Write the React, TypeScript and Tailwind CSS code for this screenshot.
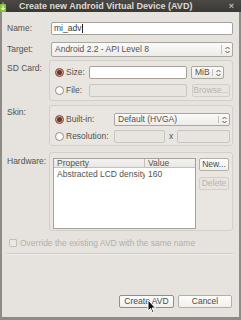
function Radio({ on }: { on?: boolean }) {
  return on ? (
    <span className="w-[9px] h-[9px] shrink-0 rounded-full border border-[#7d4a3b] bg-[#c9a79b] flex items-center justify-center">
      <span className="w-[5px] h-[5px] rounded-full bg-[#6e3526]" />
    </span>
  ) : (
    <span className="w-[9px] h-[9px] shrink-0 rounded-full border border-[#8f8b85] bg-white" />
  );
}

function Spin() {
  return (
    <svg width="5" height="8" viewBox="0 0 5 8" className="shrink-0">
      <path d="M0.5 3 L2.5 1 L4.5 3 M0.5 5 L2.5 7 L4.5 5" fill="none" stroke="#5a5852" strokeWidth="1" />
    </svg>
  );
}

function Combo({ text, className }: { text: string; className: string }) {
  return (
    <div className={`flex items-center rounded-[2px] border border-[#a9a59f] bg-gradient-to-b from-[#fbfaf9] to-[#eeece9] pl-[3px] ${className}`}>
      <span className="flex-1 overflow-hidden whitespace-nowrap">{text}</span>
      <span className="h-[70%] w-px bg-[#c4c0ba]" />
      <span className="w-[10px] flex justify-center">
        <Spin />
      </span>
    </div>
  );
}

function Field({ className, off }: { className: string; off?: boolean }) {
  return (
    <div
      className={`rounded-[2px] border ${off ? "border-[#c9c5bf] bg-[#e8e5e0]" : "border-[#a5a19b] bg-white"} ${className}`}
    />
  );
}

function Btn({ label, className, off, focus }: { label: string; className: string; off?: boolean; focus?: boolean }) {
  return (
    <div
      className={`flex items-center justify-center rounded-[2px] border ${
        focus ? "border-[#9c8a80]" : off ? "border-[#d2cec8]" : "border-[#b3afa9]"
      } ${off ? "bg-[#e8e5e0] text-[#b8b4ad]" : "bg-gradient-to-b from-[#fdfdfc] to-[#f1efec] text-[#4a4944]"} ${className}`}
    >
      {label}
    </div>
  );
}

function Group({ className, children }: { className: string; children: React.ReactNode }) {
  return <div className={`rounded-[3px] border border-[#d3cfc9] bg-[#e9e6e1] ${className}`}>{children}</div>;
}

export default function App() {
  return (
    <div className="relative w-[241px] h-[320px] overflow-hidden flex flex-col bg-[#e6e3de] font-['Liberation_Sans',sans-serif] text-[8.5px] leading-none text-[#53524d]">
      {/* title bar */}
      <div className="h-[12px] shrink-0 flex items-center bg-gradient-to-b from-[#4a4945] to-[#3a3935] text-[#dfdbd2]">
        <svg width="7" height="10" viewBox="0 0 7 10" className="ml-0 mt-px">
          <rect x="0" y="2" width="6" height="8" rx="1" fill="#8ec23f" />
          <path d="M3 0 L3 2" stroke="#8ec23f" />
          <path d="M3 3.5 L3 7.5 M1.3 6 L3 7.8 L4.7 6" stroke="#ffffff" strokeWidth="1" fill="none" />
        </svg>
        <span className="ml-[12px] font-bold text-[9px]">Create new Android Virtual Device (AVD)</span>
        <span className="ml-auto mr-[7px] text-[9px] font-bold text-[#bdbab3]">×</span>
      </div>

      {/* body */}
      <div className="flex-1 flex flex-col border-x-2 border-b-[3px] border-[#8e8b86] pl-[5px] pr-[6px]">
        {/* Name */}
        <div className="mt-[10px] flex items-center h-[13px]">
          <span className="w-[43px]">Name:</span>
          <div className="ml-[1px] w-[182px] h-[13px] bg-white border border-[#a5a19b] rounded-[2px] flex items-center pl-[2px] text-[#3c3b37]">
            mi_adv<span className="ml-px w-px h-[9px] bg-[#222]" />
          </div>
        </div>

        {/* Target */}
        <div className="mt-[7px] flex items-center h-[15px]">
          <span className="w-[43px]">Target:</span>
          <Combo text="Android 2.2 - API Level 8" className="ml-[1px] w-[182px] h-[15px]" />
        </div>

        {/* SD Card */}
        <div className="mt-[3px] flex items-start">
          <span className="w-[42px] mt-[4px]">SD Card:</span>
          <Group className="w-[184px] h-[41px] pt-[5px] pl-[5px] flex flex-col gap-[5px]">
            <div className="flex items-center h-[13px]">
              <Radio on />
              <span className="ml-[2px] w-[23px]">Size:</span>
              <Field className="w-[98px] h-[13px]" />
              <Combo text="MiB" className="ml-[4px] w-[33px] h-[13px]" />
            </div>
            <div className="flex items-center h-[13px]">
              <Radio />
              <span className="ml-[2px] w-[23px]">File:</span>
              <Field off className="w-[98px] h-[13px]" />
              <Btn off label="Browse..." className="ml-[5px] w-[38px] h-[13px]" />
            </div>
          </Group>
        </div>

        {/* Skin */}
        <div className="mt-[4px] flex items-start">
          <span className="w-[42px] mt-[3px]">Skin:</span>
          <Group className="w-[184px] h-[41px] pt-[7px] pl-[5px] flex flex-col gap-[4px]">
            <div className="flex items-center h-[13px]">
              <Radio on />
              <span className="ml-[2px] w-[48px]">Built-in:</span>
              <Combo text="Default (HVGA)" className="w-[116px] h-[13px]" />
            </div>
            <div className="flex items-center h-[13px]">
              <Radio />
              <span className="ml-[2px] w-[48px]">Resolution:</span>
              <Field off className="w-[51px] h-[13px]" />
              <span className="w-[12px] text-center">x</span>
              <Field off className="w-[53px] h-[13px]" />
            </div>
          </Group>
        </div>

        {/* Hardware */}
        <div className="mt-[6px] flex items-start">
          <span className="w-[42px] mt-[5px]">Hardware:</span>
          <Group className="w-[184px] h-[79px] pt-[5px] pl-[3px] flex gap-[3px]">
            <div className="w-[143px] h-[71px] border border-[#a5a19b] bg-white flex flex-col">
              <div className="h-[9px] flex bg-gradient-to-b from-[#f4f3f1] to-[#e9e7e3] border-b border-[#c4c0ba]">
                <span className="w-[91px] pl-[3px] border-r border-[#c4c0ba] flex items-center">Property</span>
                <span className="pl-[3px] flex items-center">Value</span>
              </div>
              <div className="h-[13px] flex items-center">
                <span className="w-[91px] pl-[3px] overflow-hidden whitespace-nowrap">Abstracted LCD density</span>
                <span className="pl-[3px]">160</span>
              </div>
            </div>
            <div className="flex flex-col gap-[6px]">
              <Btn label="New..." className="w-[30px] h-[13px]" />
              <Btn off label="Delete" className="w-[30px] h-[13px]" />
            </div>
          </Group>
        </div>

        {/* override */}
        <div className="mt-[6px] flex items-center h-[12px] pl-[2px] text-[#b3afa8]">
          <span className="w-[8px] h-[8px] border border-[#c2beb8] rounded-[1px] bg-[#ebe8e4]" />
          <span className="ml-[3px]">Override the existing AVD with the same name</span>
        </div>

        <div className="mt-[4px] h-[2px] border-t border-[#cdc9c3] border-b border-b-[#f3f1ee]" />

        <div className="mt-auto mb-[9px] flex justify-end gap-[4px] pr-[1px]">
          <Btn focus label="Create AVD" className="w-[55px] h-[13px]" />
          <Btn label="Cancel" className="w-[54px] h-[13px]" />
        </div>
      </div>

      {/* mouse pointer */}
      <svg width="10" height="15" viewBox="0 0 10 15" className="absolute left-[147px] top-[299px]">
        <path d="M1 1 L1 12 L3.5 9.5 L5.5 14 L7 13.3 L5 9 L8.5 9 Z" fill="#111" stroke="#fff" strokeWidth="1" strokeLinejoin="round" />
      </svg>
    </div>
  );
}
